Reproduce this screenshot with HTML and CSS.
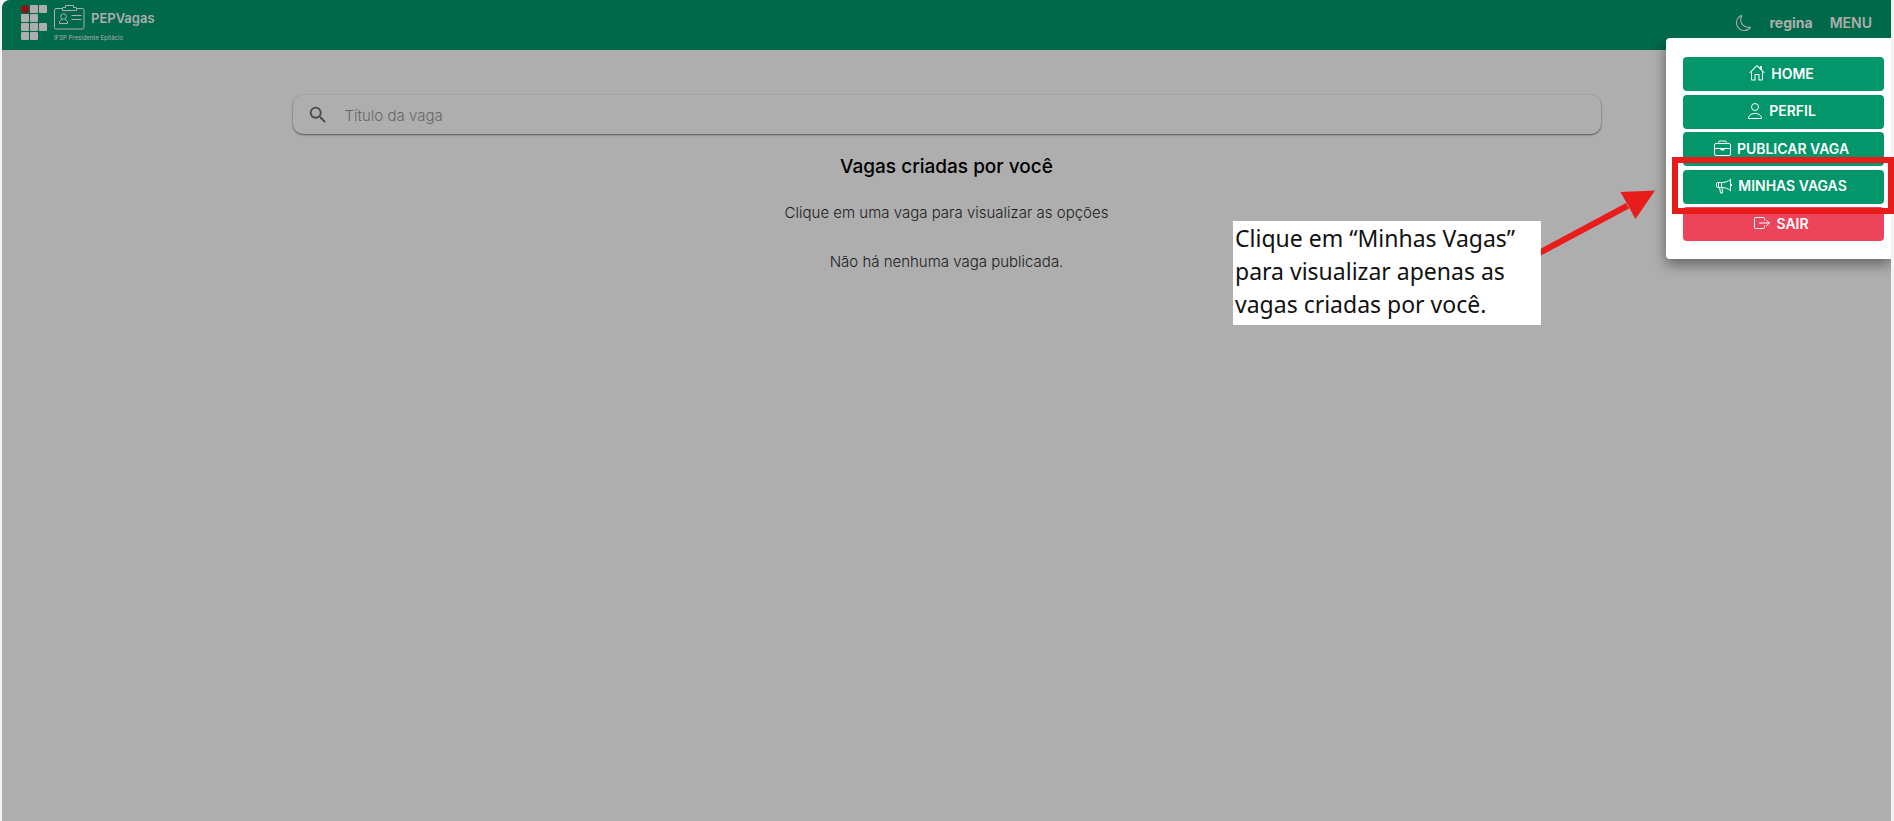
FILE: index.html
```html
<!DOCTYPE html>
<html lang="pt-BR">
<head>
<meta charset="utf-8">
<title>PEPVagas</title>
<link rel="stylesheet" href="styles.css">
</head>
<body>
<div class="page">
  <header class="topbar">
    <a class="brand" href="#">
      <svg class="campus-logo" width="26" height="35" viewBox="0 0 26 35" aria-hidden="true">
        <g fill="#aeaeae">
          <rect x="9" y="0" width="8" height="8" rx="1"/><rect x="18" y="0" width="8" height="8" rx="1"/>
          <rect x="0" y="9" width="8" height="8" rx="1"/><rect x="9" y="9" width="8" height="8" rx="1"/>
          <rect x="0" y="18" width="8" height="8" rx="1"/><rect x="9" y="18" width="8" height="8" rx="1"/><rect x="18" y="18" width="8" height="8" rx="1"/>
          <rect x="0" y="27" width="8" height="8" rx="1"/><rect x="9" y="27" width="8" height="8" rx="1"/>
        </g>
        <circle cx="4" cy="4" r="4.2" fill="#8f1214"/>
      </svg>
      <span class="brand-text">
        <span class="brand-row">
          <svg width="31" height="25" viewBox="0 0 31 25" fill="none" stroke="#aeaeae" aria-hidden="true">
            <path d="M8.500 3.500H2Q.5 3.500 .5 5V22.500Q.5 24 2 24H28.500Q30 24 30 22.500V5Q30 3.500 28.500 3.500H22.500"/>
            <path d="M8.500 5.500V3Q8.500 2.500 9 2.500H11.500V.5H19.500V2.500H22Q22.500 2.500 22.500 3V5.500Z"/>
            <circle cx="9.500" cy="11.500" r="2.800"/>
            <path d="M8 14L5.500 16.500V18.500H13.500V16.500L11 14M17.500 10.500H27.500M17.500 14.500H27.500"/>
          </svg>
          <span class="brand-name">PEPVagas</span>
        </span>
        <span class="brand-campus">IFSP Presidente Epitácio</span>
      </span>
    </a>
    <nav class="account">
      <button class="plain" type="button" aria-label="Tema escuro">
        <svg width="16" height="16" viewBox="0 0 16 16" fill="currentColor"><path d="M6 .278a.77.77 0 0 1 .08.858 7.200 7.200 0 0 0-.878 3.460c0 4.021 3.278 7.277 7.318 7.277q.792-.001 1.533-.16a.79.79 0 0 1 .81.316.73.73 0 0 1-.031.893A8.350 8.350 0 0 1 8.344 16C3.734 16 0 12.286 0 7.710 0 4.266 2.114 1.312 5.124.06A.75.75 0 0 1 6 .278M4.858 1.311A7.270 7.270 0 0 0 1.025 7.710c0 4.020 3.279 7.276 7.319 7.276a7.320 7.320 0 0 0 5.205-2.162q-.506.063-1.029.063c-4.610 0-8.343-3.714-8.343-8.290 0-1.167.242-2.278.681-3.286"/></svg>
      </button>
      <span class="user">regina</span>
      <button class="plain" type="button">MENU</button>
    </nav>
  </header>

  <main class="content">
    <label class="search">
      <svg width="22" height="22" viewBox="0 0 24 24" fill="#4a4a4a" aria-hidden="true"><path d="M15.500 14h-.79l-.28-.27A6.470 6.470 0 0 0 16 9.500 6.500 6.500 0 1 0 9.500 16c1.610 0 3.090-.59 4.230-1.570l.27.28v.79l5 4.990L20.490 19zm-6 0C7.010 14 5 11.990 5 9.500S7.010 5 9.500 5 14 7.010 14 9.500 11.990 14 9.500 14"/></svg>
      <input type="text" placeholder="Título da vaga" aria-label="Título da vaga">
    </label>
    <h1 class="title">Vagas criadas por você</h1>
    <p class="message">Clique em uma vaga para visualizar as opções</p>
    <p class="message">Não há nenhuma vaga publicada.</p>
  </main>

  <nav class="menu">
    <button class="menu-item" type="button">
      <svg width="16" height="16" viewBox="0 0 16 16" fill="currentColor" aria-hidden="true"><path d="M8.707 .5a1 1 0 0 0-1.414 0L.646 7.146a.5.5 0 0 0 .708.708L2 7.207V14.500A1 1 0 0 0 3 15.500h3.500V10h3v5.500H13a1 1 0 0 0 1-1V7.207l.646.647a.5.5 0 0 0 .708-.708L13 4.793V1.500a.5.5 0 0 0-.5-.5h-1a.5.5 0 0 0-.5.5v1.293zM13 6.207V14.500H10.500V9.500a.5.5 0 0 0-.5-.5H6a.5.5 0 0 0-.5.5V14.500H3V6.207l5-5z"/></svg>
      HOME</button>
    <button class="menu-item" type="button">
      <svg width="16" height="16" viewBox="0 0 16 16" fill="none" stroke="currentColor" aria-hidden="true"><circle cx="8" cy="4" r="3.500"/><path d="M1.500 15.500V14.500C2.500 11.500 4.800 10.500 8 10.500S13.500 11.500 14.500 14.500V15.500Z"/></svg>
      PERFIL</button>
    <button class="menu-item" type="button">
      <svg width="17" height="16" viewBox="0 0 17 16" fill="none" stroke="currentColor" aria-hidden="true"><path d="M4.500 3.500V2.500Q4.500 1 6 1H11Q12.500 1 12.500 2.500V3.500M2 3.500H15Q16.500 3.500 16.500 5V14Q16.500 15.500 15 15.500H2Q.5 15.500 .5 14V5Q.5 3.500 2 3.500ZM.5 8.500H16.500"/><path fill="currentColor" stroke="none" d="M6.500 8.500h4v1a1 1 0 0 1-1 1h-2a1 1 0 0 1-1-1z"/></svg>
      PUBLICAR VAGA</button>
    <button class="menu-item highlighted" type="button">
      <svg width="16" height="16" viewBox="0 0 16 16" fill="none" stroke="currentColor" stroke-linejoin="round" aria-hidden="true"><path d="M14.500 .8V13.200M14.500 1.500C12 3.500 9 4.500 5.500 4.500V9.500C9 9.500 12 10.500 14.500 12.500M5.500 4.500H1.500Q.5 4.500 .5 5.500V8.500Q.5 9.500 1.500 9.500H5.500M2.500 4.500V9.500M3.500 9.500L4.500 15H6.500L6 9.700M15.500 6V8"/></svg>
      MINHAS VAGAS</button>
    <button class="menu-item danger" type="button">
      <svg width="16" height="16" viewBox="0 0 16 16" fill="none" stroke="currentColor" stroke-linecap="round" aria-hidden="true"><path d="M10.500 5V3.500Q10.500 2.500 9.500 2.500H1.500Q.5 2.500 .5 3.500V12.500Q.5 13.500 1.500 13.500H9.500Q10.500 13.500 10.500 12.500V11M5.500 8H15.200M12.300 5L15.300 8L12.300 11"/></svg>
      SAIR</button>
  </nav>

  <aside class="callout">
    <p class="callout-text">Clique em “Minhas Vagas” para visualizar apenas as vagas criadas por você.</p>
    <svg class="arrow" width="114" height="66" viewBox="0 0 114 66" fill="#e81c1b" aria-hidden="true"><path d="M0 58.500L85 13L88 18.500L0 65.500Z"/><path d="M79.500 2L114 .5L94.500 29Z"/></svg>
    <span class="marker"></span>
  </aside>
</div>
</body>
</html>
```
FILE: styles.css
```css
* { box-sizing: border-box; }

body {
  margin: 0;
  background: #f4f4f4;
  font-family: Inter, "Liberation Sans", sans-serif;
}

button { font: inherit; cursor: pointer; }

.page {
  position: relative;
  min-height: 100vh;
  margin: 0 3px 0 2px;
  background: #aeaeae;
  border-top-left-radius: 8px;
}

.topbar {
  display: flex;
  justify-content: space-between;
  height: 50px;
  padding: 0 19px;
  background: #00694a;
  color: #aeaeae;
  border-top-left-radius: 8px;
}

.brand {
  display: flex;
  gap: 7px;
  padding-top: 5px;
  color: inherit;
  text-decoration: none;
}

.brand-text { display: flex; flex-direction: column; gap: 3px; }
.brand-row { display: flex; gap: 6px; line-height: 26px; }
.brand-name { font-size: 13px; font-weight: 600; }
.brand-campus { font-size: 6px; line-height: 8px; }

.account {
  display: flex;
  align-items: center;
  gap: 17px;
  height: 45px;
  font-size: 14px;
  font-weight: 600;
}

.plain {
  display: flex;
  padding: 0;
  border: 0;
  background: none;
  color: inherit;
}

.user { font-weight: 700; }

.content {
  display: flex;
  flex-direction: column;
  align-items: center;
  padding: 45px 0;
}

.search {
  display: flex;
  align-items: center;
  gap: 16px;
  width: 1308px;
  max-width: 90%;
  height: 39px;
  padding: 0 14px;
  border-radius: 10px;
  box-shadow: 0 1px 2px rgba(0, 0, 0, 0.5), 0 0 2px rgba(0, 0, 0, 0.08);
  background: #aeaeae;
}

.search input {
  flex: 1;
  padding: 0;
  border: 0;
  outline: 0;
  background: none;
  font: 300 16px/24px Inter, sans-serif;
}

.search input::placeholder { color: #666; opacity: 1; font-size: 15px; }

.title {
  margin: 21px 0 22px;
  font-size: 19px;
  font-weight: 500;
  line-height: 24px;
}

.message {
  margin: 0 0 25px;
  color: #1c1c1c;
  font-size: 15px;
  font-weight: 300;
  line-height: 24px;
}

.menu {
  position: absolute;
  top: 38px;
  right: 0;
  display: flex;
  flex-direction: column;
  justify-content: space-between;
  width: 225px;
  padding: 19px 7px 18px 17px;
  height: 221px;
  border-radius: 4px 0 0 4px;
  background: #fff;
  box-shadow: 0 5px 14px rgba(0, 0, 0, 0.45);
  clip-path: inset(0 0 -40px -40px);
}

.menu-item {
  display: flex;
  align-items: center;
  justify-content: center;
  gap: 6px;
  height: 34px;
  padding: 0 4px 2px 0;
  border: 0;
  border-radius: 4px;
  background: #03966b;
  color: #fff;
  font-size: 14px;
  font-weight: 600;
}

.danger { background: #ec445a; }

.callout {
  position: absolute;
  top: 221px;
  right: 350px;
  width: 308px;
}

.callout-text {
  margin: 0;
  padding: 1px 2px 4px;
  background: #fff;
  color: #111;
  font: 23px/33px "Noto Sans", sans-serif;
}

.arrow {
  position: absolute;
  left: 100%;
  bottom: 69px;
}

.marker {
  position: absolute;
  top: -64px;
  right: -353px;
  width: 222px;
  height: 57px;
  border: 6px solid #e81c1b;
}
```
